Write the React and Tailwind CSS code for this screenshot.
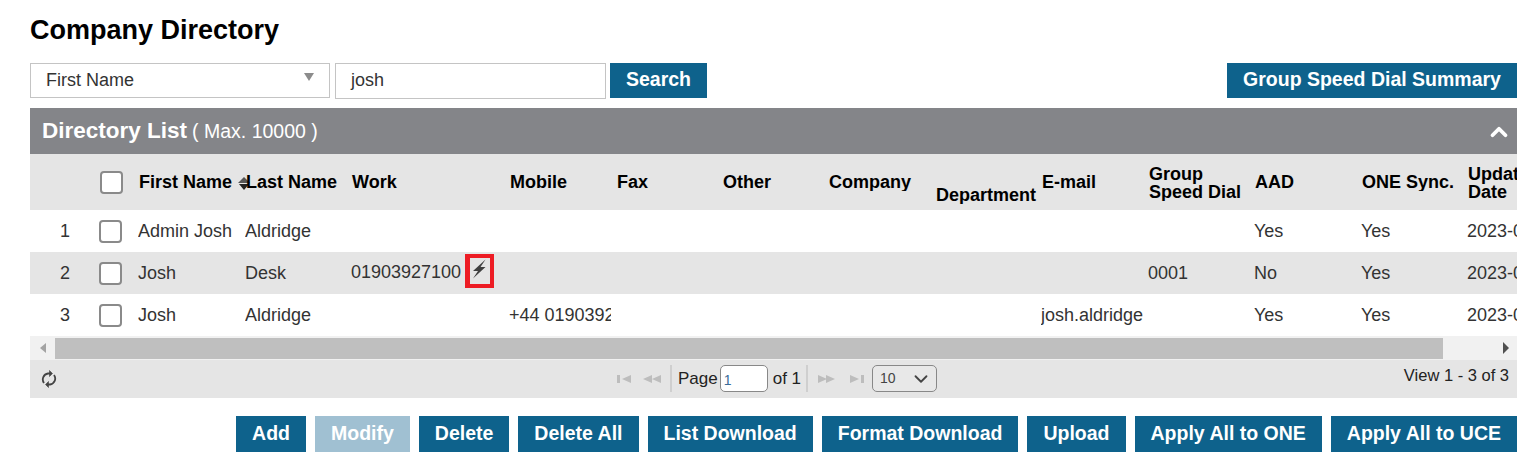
import React from 'react';
import { ChevronDown, ChevronUp } from 'lucide-react';

const columns = 'grid grid-cols-[70px_38px_107px_106px_158px_107px_106px_106px_107px_106px_107px_106px_107px_106px_120px]';

const rows = [
  { n: 1, first: 'Admin Josh', last: 'Aldridge', aad: 'Yes', one: 'Yes' },
  { n: 2, first: 'Josh', last: 'Desk', work: '01903927100', group: '0001', aad: 'No', one: 'Yes', shaded: true },
  { n: 3, first: 'Josh', last: 'Aldridge', mobile: '+44 01903927100', email: 'josh.aldridge@company.com', aad: 'Yes', one: 'Yes' },
];

function Btn({ children, disabled }) {
  return (
    <button className={`h-9 px-4 text-[19.5px] font-bold text-white ${disabled ? 'bg-[#a0c0d2]' : 'bg-[#0e628c]'}`}>
      {children}
    </button>
  );
}

function Check({ className = '' }) {
  return <span className={`block w-[23px] h-[23px] rounded-[4px] border-2 border-[#8a8a8a] bg-white ${className}`} />;
}

function Cell({ children }) {
  return <div className="overflow-hidden whitespace-nowrap mr-[5px] text-[18px] text-[#333]">{children}</div>;
}

function Head({ children, className = '' }) {
  return <div className={`pl-px text-[18px] font-bold leading-[18px] text-black whitespace-nowrap overflow-hidden ${className}`}>{children}</div>;
}

function PagerIcon({ w, d, className = '' }) {
  return (
    <svg className={className} width={w} height="8" viewBox={`0 0 ${w} 8`} fill="#bdbdbd">
      <path d={d} />
    </svg>
  );
}

export default function App() {
  return (
    <div className="w-[1534px] h-[465px] overflow-hidden bg-white font-['Liberation_Sans',Arial,sans-serif]">
      <div className="pl-[30px] pr-[17px]">
        <h1 className="pt-[13px] text-[27px] leading-[34px] font-bold text-black">Company Directory</h1>

        <div className="mt-[16px] flex items-start">
          <div className="relative w-[300px] h-[35px] border border-[#c4c4c4] flex items-center pl-[15px] text-[18px] text-[#333]">
            First Name
            <span className="absolute right-[15px] top-[9px] w-0 h-0 border-x-[5px] border-x-transparent border-t-[8px] border-t-[#8c8c8c]" />
          </div>
          <div className="ml-[5px] w-[271px] h-[36px] border border-[#c4c4c4] flex items-center pl-[15px] pb-[2px] text-[18px] text-[#333]">josh</div>
          <button className="ml-[4px] w-[97px] h-[35px] pb-[2px] bg-[#0e628c] text-[19.5px] font-bold text-white">Search</button>
          <button className="ml-auto w-[290px] h-[35px] pb-[2px] bg-[#0e628c] text-[19.5px] font-bold text-white">Group Speed Dial Summary</button>
        </div>

        <div className="mt-[9px] w-[1487px] overflow-hidden">
          <div className="h-[46px] bg-[#848589] flex items-center justify-between pl-[12px] pr-[5px] text-white">
            <div className="flex items-baseline">
              <span className="text-[22.5px] font-bold">Directory List</span>
              <span className="ml-[5px] text-[19.5px]">( Max. 10000 )</span>
            </div>
            <ChevronUp size={26} strokeWidth={3.5} className="mt-[2px]" />
          </div>

          <div className={`${columns} h-[56px] bg-[#e5e5e5] items-center`}>
            <div />
            <Check />
            <Head>First Name</Head>
            <div className="relative">
              <span className="absolute -left-[7px] top-[4px] w-0 h-0 border-x-[6px] border-x-transparent border-b-[6px] border-b-[#555]" />
              <span className="absolute -left-[6px] top-[11px] w-0 h-0 border-x-[5px] border-x-transparent border-t-[6px] border-t-[#222]" />
              <Head className="relative">Last Name</Head>
            </div>
            <Head>Work</Head>
            <Head>Mobile</Head>
            <Head>Fax</Head>
            <Head>Other</Head>
            <Head>Company</Head>
            <Head className="pt-[26px]">Department</Head>
            <Head>E-mail</Head>
            <Head className="pt-[2px]">Group<br />Speed Dial</Head>
            <Head>AAD</Head>
            <Head>ONE Sync.</Head>
            <Head className="pt-[2px]">Update<br />Date</Head>
          </div>

          {rows.map((r) => (
            <div key={r.n} className={`${columns} h-[42px] items-center ${r.shaded ? 'bg-[#e5e5e5]' : 'bg-white'}`}>
              <div className="pl-[30px] text-[18px] text-[#333]">{r.n}</div>
              <Check className="-ml-px" />
              <Cell>{r.first}</Cell>
              <Cell>{r.last}</Cell>
              <div className="relative text-[18px] text-[#333] -mt-[2px]">
                {r.work}
                {r.work && (
                  <span className="absolute left-[114px] -top-[5px] w-[29px] h-[34px] border-l-[5px] border-r-[4px] border-y-[4px] border-[#ed1c24] flex items-center justify-center pr-[2px] pb-[3px]">
                    <svg width="16" height="20" viewBox="0 0 16 20" className="shrink-0 blur-[0.6px]">
                      <path d="M14.500 0.500L2 12h5L2 19.500 14.500 8h-5z" fill="#404040" />
                    </svg>
                  </span>
                )}
              </div>
              <Cell>{r.mobile}</Cell>
              <Cell />
              <Cell />
              <Cell />
              <Cell />
              <Cell>{r.email}</Cell>
              <Cell>{r.group}</Cell>
              <Cell>{r.aad}</Cell>
              <Cell>{r.one}</Cell>
              <Cell>2023-06-01</Cell>
            </div>
          ))}

          <div className="h-[24px] bg-[#f1f1f1] flex items-center">
            <div className="w-[25px] flex justify-center">
              <span className="w-0 h-0 border-y-[5px] border-y-transparent border-r-[6px] border-r-[#a3a3a3]" />
            </div>
            <div className="w-[1388px] h-[21px] bg-[#bfbfbf]" />
            <div className="flex-1 flex justify-end pr-[8px]">
              <span className="w-0 h-0 border-y-[6px] border-y-transparent border-l-[6px] border-l-[#505050]" />
            </div>
          </div>

          <div className="relative h-[38px] bg-[#e5e5e5] flex items-center justify-center pl-[7px] pb-[1px] text-[17px] text-[#222]">
            <svg className="absolute left-[11px] top-[10px]" width="16" height="18" viewBox="0 0 16 18" fill="none" stroke="#444" strokeWidth="1.800">
              <path d="M3 13a6 6 0 0 1 4-9.500h2M13 5a6 6 0 0 1-4 9.500H7" />
              <path d="M8.500 0.500v6l3-3zM7.500 11.500v6l-3-3z" fill="#444" strokeWidth="0.600" />
            </svg>
            <div className="flex items-center">
              <PagerIcon w={14} d="M0 0h3v8H0zM5 4l9-4v8z" />
              <PagerIcon w={18} d="M0 4l9-4v8zM9 4l9-4v8z" className="ml-[12px]" />
              <span className="ml-[9px] mr-[6px] w-[2px] h-[27px] bg-[#cfcfcf]" />
              <span>Page</span>
              <span className="ml-[2px] w-[48px] h-[27px] rounded-[5px] border border-[#888] bg-white text-[14px] text-[#3b6d99] pl-[3px] pt-[5px] leading-[18px]">1</span>
              <span className="ml-[5px]">of 1</span>
              <span className="ml-[5px] mr-[10px] w-[2px] h-[27px] bg-[#cfcfcf]" />
              <PagerIcon w={17} d="M0 0l9 4-9 4zM8 0l9 4-9 4z" />
              <PagerIcon w={14} d="M0 0l9 4-9 4zM11 0h3v8h-3z" className="ml-[15px]" />
              <span className="ml-[8px] w-[65px] h-[27px] rounded-[5px] border border-[#888] bg-[#e8e8e8] flex items-center justify-between pl-[7px] pr-[4px] text-[14px] text-[#444]">
                10
                <ChevronDown size={22} strokeWidth={2} />
              </span>
            </div>
            <span className="absolute right-[8px] top-[3px] text-[16.5px] text-[#222]">View 1 - 3 of 3</span>
          </div>
        </div>

        <div className="mt-[18px] w-[1487px] flex justify-end gap-[9px]">
          <Btn>Add</Btn>
          <Btn disabled>Modify</Btn>
          <Btn>Delete</Btn>
          <Btn>Delete All</Btn>
          <Btn>List Download</Btn>
          <Btn>Format Download</Btn>
          <Btn>Upload</Btn>
          <Btn>Apply All to ONE</Btn>
          <Btn>Apply All to UCE</Btn>
        </div>
      </div>
    </div>
  );
}
